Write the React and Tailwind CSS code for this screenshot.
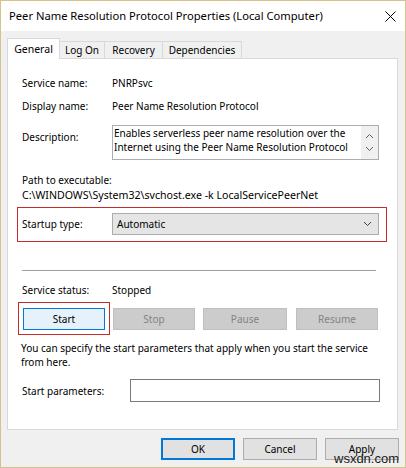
import React from "react";

const font = { fontFamily: '"Noto Sans", "Liberation Sans", sans-serif' };

function Chevron({ dir }) {
  return (
    <svg width="9" height="6" viewBox="0 0 9 6" className="block">
      {dir === "up" ? (
        <path d="M1 5 L4.5 1.5 L8 5" fill="none" stroke="#606060" strokeWidth="1" />
      ) : (
        <path d="M1 1 L4.5 4.5 L8 1" fill="none" stroke="#606060" strokeWidth="1" />
      )}
    </svg>
  );
}

function Btn({ children, w, disabled, primary, start }) {
  let cls = "flex h-[22px] items-center justify-center border ";
  if (start) cls += "border-[#0078d7] bg-[#e5f1fb] text-black";
  else if (disabled) cls += "border-[#bfbfbf] bg-[#cccccc] text-[#838383]";
  else if (primary) cls += "border-2 border-[#0078d7] bg-[#e1e1e1] text-black";
  else cls += "border-[#adadad] bg-[#e1e1e1] text-black";
  return (
    <div className={cls} style={{ width: w }}>
      {children}
    </div>
  );
}

export default function App() {
  return (
    <div
      className="relative flex h-[468px] w-[406px] flex-col border border-[#d4c48b] bg-[#f0f0f0] text-[10px] leading-[14px] text-black"
      style={font}
    >
      {/* Title bar */}
      <div className="flex h-[30px] items-center justify-between bg-white pl-[8px] pr-[9px]">
        <span className="text-[11.2px]">Peer Name Resolution Protocol Properties (Local Computer)</span>
        <svg width="11" height="11" viewBox="0 0 11 11">
          <path d="M0.5 0.5 L10.5 10.5 M10.5 0.5 L0.5 10.5" stroke="#000" strokeWidth="1" />
        </svg>
      </div>

      {/* Tabs */}
      <div className="relative z-10 ml-[6px] mt-[7px] flex h-[20px] items-end">
        <div className="relative z-10 -mb-px flex h-[21px] w-[53px] items-start justify-center border border-b-0 border-[#d9d9d9] bg-white pt-[3px] text-[10.5px]">
          General
        </div>
        <div className="flex h-[17px] w-[45px] items-center justify-center border border-l-0 border-b-0 border-[#d9d9d9] bg-[#f0f0f0]">Log On</div>
        <div className="flex h-[17px] w-[58px] items-center justify-center border border-l-0 border-b-0 border-[#d9d9d9] bg-[#f0f0f0]">Recovery</div>
        <div className="flex h-[17px] w-[79px] items-center justify-center border border-l-0 border-b-0 border-[#d9d9d9] bg-[#f0f0f0]">Dependencies</div>
      </div>

      {/* Tab page */}
      <div className="ml-[6px] flex h-[372px] w-[391px] flex-col border border-[#d9d9d9] bg-white pl-[14px]">
        <div className="mt-[16px] flex leading-[16px]">
          <span className="w-[90px]">Service name:</span>
          <span>PNRPsvc</span>
        </div>
        <div className="mt-[7px] flex leading-[16px]">
          <span className="w-[90px]">Display name:</span>
          <span>Peer Name Resolution Protocol</span>
        </div>
        <div className="mt-[11px] flex">
          <span className="w-[90px] pt-[4px] leading-[16px]">Description:</span>
          <div className="flex h-[35px] w-[267px] border border-[#abadb3] bg-white">
            <div className="flex-1 pl-[1px] leading-[14px]">
              Enables serverless peer name resolution over the
              <br />
              Internet using the Peer Name Resolution Protocol
            </div>
            <div className="flex w-[17px] flex-col items-center justify-between bg-[#f0f0f0] py-[7px]">
              <Chevron dir="up" />
              <Chevron dir="down" />
            </div>
          </div>
        </div>
        <div className="mt-[13px]">Path to executable:</div>
        <div className="mt-[1px] text-[10.6px]">C:\WINDOWS\System32\svchost.exe -k LocalServicePeerNet</div>

        {/* Startup type */}
        <div className="-ml-[5px] mt-[5px] flex h-[35px] w-[370px] items-start border border-[#c42b2b] pl-[4px] pt-[5px]">
          <span className="w-[90px] pt-[3px] leading-[16px]">Startup type:</span>
          <div className="flex h-[22px] w-[267px] items-center justify-between border border-[#acacac] bg-[#e5e5e5] pl-[4px] pr-[6px]">
            <span>Automatic</span>
            <svg width="9" height="6" viewBox="0 0 9 6">
              <path d="M1 1 L4.5 4.5 L8 1" fill="none" stroke="#404040" strokeWidth="1" />
            </svg>
          </div>
        </div>

        <div className="mt-[28px] h-px w-[354px] bg-[#a0a0a0]" />

        <div className="mt-[11px] flex leading-[16px]">
          <span className="w-[90px]">Service status:</span>
          <span>Stopped</span>
        </div>

        {/* Service control buttons */}
        <div className="mt-[4px] flex items-start">
          <div className="-ml-[4px] flex h-[33px] w-[92px] items-start border border-[#c42b2b] pl-[4px] pt-[5px]">
            <Btn w={82} start>Start</Btn>
          </div>
          <div className="ml-[3px] mt-[6px]">
            <Btn w={82} disabled>Stop</Btn>
          </div>
          <div className="ml-[8px] mt-[6px]">
            <Btn w={84} disabled>Pause</Btn>
          </div>
          <div className="ml-[9px] mt-[6px]">
            <Btn w={82} disabled>Resume</Btn>
          </div>
        </div>

        <div className="-ml-[1px] mt-[6px] leading-[14px]">
          You can specify the start parameters that apply when you start the service
          <br />
          from here.
        </div>

        <div className="mt-[10px] flex items-center">
          <span className="w-[108px]">Start parameters:</span>
          <div className="h-[23px] w-[250px] border border-[#7a7a7a] bg-white" />
        </div>
      </div>

      {/* Dialog buttons */}
      <div className="mt-[8px] flex justify-end gap-[8px] pr-[6px]">
        <Btn w={74} primary>OK</Btn>
        <Btn w={74}>Cancel</Btn>
        <Btn w={74}>Apply</Btn>
      </div>

      {/* Site watermark */}
      <span
        className="absolute left-[333px] top-[450px] text-[13px] leading-[16px] text-[#1a1a1a]"
        style={{ fontFamily: '"Liberation Sans", sans-serif' }}
      >
        wsxdn.com
      </span>
    </div>
  );
}
